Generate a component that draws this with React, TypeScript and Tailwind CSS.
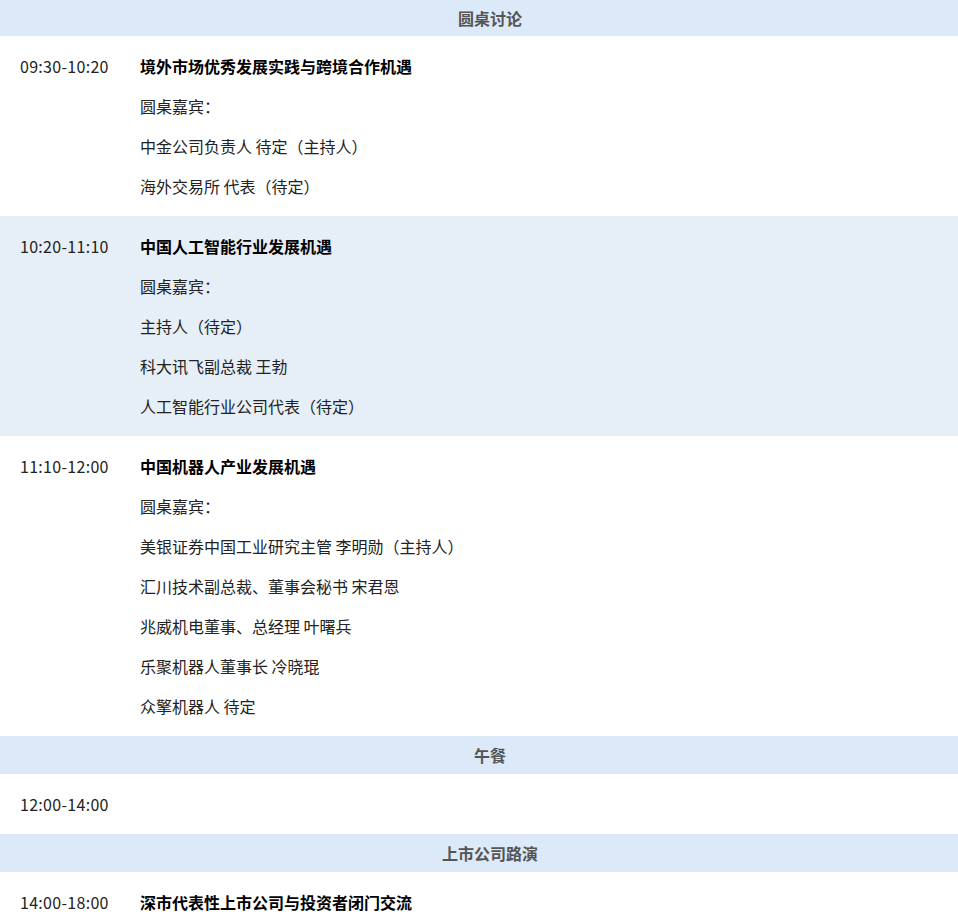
const F = { fontFamily: '"Noto Sans CJK SC", "Noto Sans", sans-serif' };

type Row = { time: string; title?: string; lines: string[]; alt?: boolean };

function Header({ text, h }: { text: string; h: string }) {
  return (
    <div className={`${h} bg-[#dce9f8] flex items-center justify-center pl-[22px] text-[16px] font-bold text-[#555]`}>
      {text}
    </div>
  );
}

function R({ time, title, lines, alt }: Row) {
  return (
    <div className={`flex py-[10px] text-[16px] text-[#222] ${alt ? 'bg-[#e6eef7]' : 'bg-white'}`}>
      <div className="w-[140px] pl-[20px] h-[40px] leading-[40px] shrink-0 tracking-[0.3px]">{time}</div>
      <div className="flex flex-col">
        {title && <div className="h-[40px] leading-[40px] font-bold text-black">{title}</div>}
        {lines.map((l) => (
          <div key={l} className="h-[40px] leading-[40px]">{l}</div>
        ))}
      </div>
    </div>
  );
}

export default function App() {
  return (
    <div className="w-[958px] bg-white" style={F}>
      <Header text="圆桌讨论" h="h-[36px]" />
      <R time="09:30-10:20" title="境外市场优秀发展实践与跨境合作机遇" lines={['圆桌嘉宾：', '中金公司负责人 待定（主持人）', '海外交易所 代表（待定）']} />
      <R alt time="10:20-11:10" title="中国人工智能行业发展机遇" lines={['圆桌嘉宾：', '主持人（待定）', '科大讯飞副总裁 王勃', '人工智能行业公司代表（待定）']} />
      <R time="11:10-12:00" title="中国机器人产业发展机遇" lines={['圆桌嘉宾：', '美银证券中国工业研究主管 李明勋（主持人）', '汇川技术副总裁、董事会秘书 宋君恩', '兆威机电董事、总经理 叶曙兵', '乐聚机器人董事长 冷晓琨', '众擎机器人 待定']} />
      <Header text="午餐" h="h-[38px]" />
      <R time="12:00-14:00" lines={[]} />
      <Header text="上市公司路演" h="h-[38px]" />
      <R time="14:00-18:00" title="深市代表性上市公司与投资者闭门交流" lines={[]} />
    </div>
  );
}
